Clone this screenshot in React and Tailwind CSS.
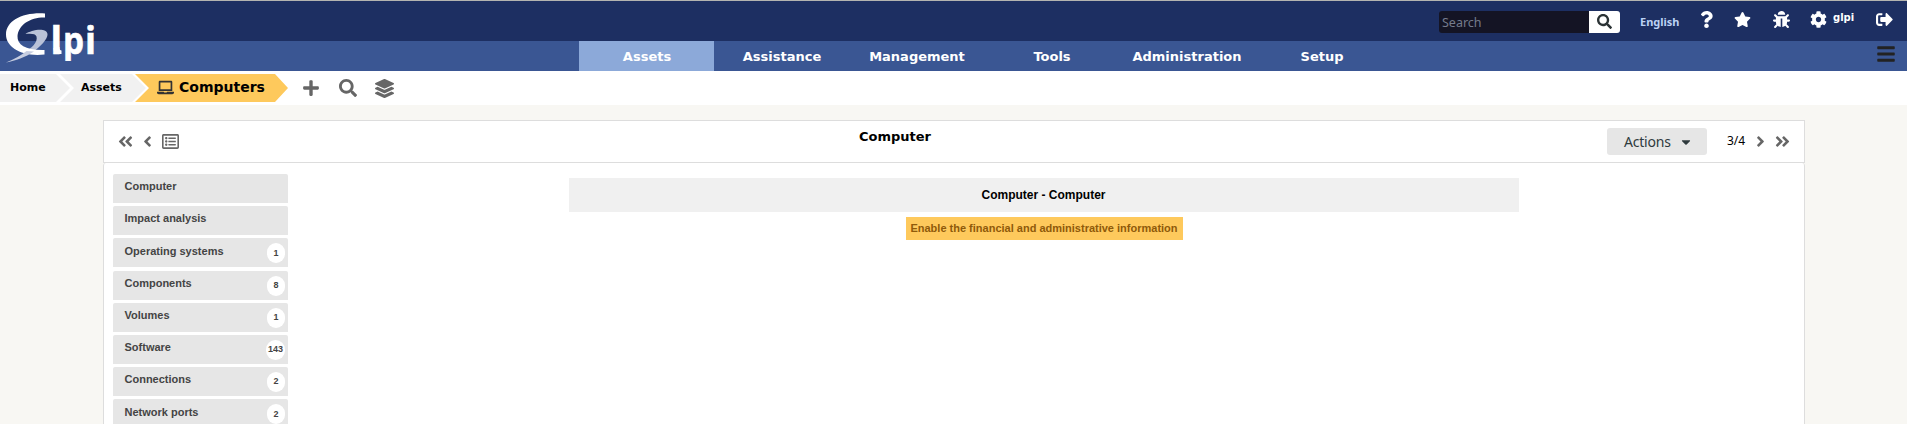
import {
  FaAngleDoubleLeft, FaAngleDoubleRight, FaAngleLeft, FaAngleRight, FaBars, FaBug, FaCaretDown,
  FaCog, FaLaptop, FaLayerGroup, FaPlus, FaQuestion, FaRegListAlt, FaSearch, FaSignOutAlt, FaStar,
} from "react-icons/fa";

const menu = ["Assets", "Assistance", "Management", "Tools", "Administration", "Setup"];

const tabs = [
  ["Computer"],
  ["Impact analysis"],
  ["Operating systems", "1"],
  ["Components", "8"],
  ["Volumes", "1"],
  ["Software", "143"],
  ["Connections", "2"],
  ["Network ports", "2"],
];

function Logo() {
  return (
    <svg width="100" height="60" viewBox="0 0 100 60" className="block" aria-label="Glpi">
      <path d="M25.500 29C31 25 46.500 22 47.500 29C48 34 40 42 33.500 46.500H24C32 43.500 38 37 36.500 31.500C35.500 28.500 31 28.500 25.500 29Z" fill="#b9c2d8" />
      <path d="M45 8.500V12.500C31 12 18.500 19.500 17.500 31C17 40 26 45.500 44.500 45V49.500C22 52 6 42.500 6 29.500C6 15.500 23 7 45 8.500Z" fill="#fff" />
      <path d="M6 57.500C14 54.500 21 50.500 26.500 46L34 46.500C25 52.500 16 55.500 6 57.500Z" fill="#c6cde0" />
      <clipPath id="stem"><path d="M50 0H100V56H50Z" /></clipPath>
      <g clipPath="url(#stem)" fill="#fff" stroke="#fff" strokeWidth="0.6" fontFamily="'Open Sans', sans-serif" fontWeight="700" fontSize="38">
        <text x="50.500" y="48.500">l</text>
        <text x="63" y="48.500" textLength="21" lengthAdjust="spacingAndGlyphs">p</text>
        <text x="85" y="48.500" textLength="11" lengthAdjust="spacingAndGlyphs">i</text>
      </g>
      <path d="M53.500 43Q53.500 49 58 49H61.500V45.500Q59.500 45.500 59.500 42Z" fill="#fff" />
    </svg>
  );
}

function Header() {
  return (
    <header>
      <div className="h-px bg-[#b4b4b0]" />
      <div className="flex h-10 justify-between bg-[#1d2f62]">
        <a className="h-10 w-[100px] shrink-0 overflow-visible pt-1">
          <span className="relative z-10 block"><Logo /></span>
        </a>
        <div className="flex text-white">
          <div className="mt-2.5 flex h-[22px] w-[181px] overflow-hidden rounded-[3px]">
            <div className="flex w-[150px] items-center bg-[#141424] pt-[2px] pl-[3px] font-['Noto_Sans',sans-serif] text-[12.5px] text-[#757b8c]">Search</div>
            <div className="flex flex-1 justify-center bg-white pt-[3px] text-[#2b3335]"><FaSearch size={15} /></div>
          </div>
          <div className="mt-[13px] ml-5 w-[41px] font-['Noto_Sans',sans-serif] text-[11px] leading-4 font-bold whitespace-nowrap text-[#bcd2f5]">English</div>
          <FaQuestion size={17} className="mt-2.5 ml-[17px]" />
          <FaStar size={17} className="mt-2.5 ml-[19px]" />
          <FaBug size={17} className="mt-2.5 ml-[22px]" />
          <FaCog size={17} className="mt-2.5 ml-5" />
          <div className="mt-[9px] ml-1.5 w-[23px] font-['DejaVu_Sans',sans-serif] text-[10px] leading-4 font-bold">glpi</div>
          <FaSignOutAlt size={17} className="mt-2.5 mr-[14px] ml-5" />
        </div>
      </div>
      <div className="flex h-[30px] bg-[#3a5693] pl-[579px]">
        <nav className="flex">
          {menu.map((name, i) => (
            <a key={name} className={`flex w-[135px] items-center justify-center pt-px pl-px text-[13px] leading-4 font-bold text-white ${i === 0 ? "bg-[#8ca9d9]" : ""}`}>
              {name}
            </a>
          ))}
        </nav>
        <FaBars size={20} className="mt-[3px] mr-[11px] ml-auto text-[#222]" />
      </div>
    </header>
  );
}

function Breadcrumb() {
  return (
    <div className="flex h-[34px] bg-white pt-[3px] font-bold text-black">
      <div className="flex h-7 w-[70px] items-center bg-[#f1f1f1] pl-2.5 text-[11px] [clip-path:polygon(0_0,56px_0,70px_50%,56px_100%,0_100%)]">Home</div>
      <div className="-ml-[10px] flex h-7 w-[86px] items-center bg-[#f1f1f1] pl-[21px] text-[11px] [clip-path:polygon(0_0,72px_0,86px_50%,72px_100%,0_100%,14px_50%)]">Assets</div>
      <div className="-ml-[11px] flex h-7 w-[153px] items-center bg-[#fec95c] pl-[22px] text-[14px] [clip-path:polygon(0_0,140px_0,100%_50%,140px_100%,0_100%,14px_50%)]">
        <FaLaptop size={17} className="-mt-0.5 shrink-0 text-[#333]" />
        <span className="-mt-px ml-[5px]">Computers</span>
      </div>
      <FaPlus size={18} className="mt-[5px] ml-3.5 text-[#666]" />
      <FaSearch size={18} className="mt-[5px] ml-[19px] text-[#666]" />
      <FaLayerGroup size={19} className="mt-[5px] ml-[18px] text-[#666]" />
    </div>
  );
}

function Toolbar() {
  return (
    <div className="flex h-[43px] border border-[#ddd] bg-white text-[#666]">
      <div className="flex w-[300px] pl-[13px]">
        <FaAngleDoubleLeft size={17} className="mt-3" />
        <FaAngleLeft size={17} className="mt-3 ml-[5px]" />
        <FaRegListAlt size={17} className="mt-3 ml-[6px]" />
      </div>
      <h1 className="flex-1 pt-2 pr-[34px] text-center text-[13px] leading-4 font-bold text-black">Computer</h1>
      <div className="flex w-[384px] justify-end pr-[13px]">
        <button className="mt-[7px] flex h-[27px] w-[100px] items-center rounded-[3px] bg-[#e6e6e6] pl-[17px] font-['Noto_Sans',sans-serif] text-[14px] tracking-[-0.2px] text-[#2f3a3d]">
          Actions<FaCaretDown size={14} className="ml-2" />
        </button>
        <span className="mt-[11px] ml-5 w-5 font-['Noto_Sans',sans-serif] text-[12px] leading-[18px] text-black">3/4</span>
        <FaAngleRight size={17} className="mt-3 ml-[5px]" />
        <FaAngleDoubleRight size={17} className="mt-3 ml-[5px]" />
      </div>
    </div>
  );
}

export default function App() {
  return (
    <div className="h-[424px] overflow-hidden bg-[#f8f7f3] font-['DejaVu_Sans',sans-serif]">
      <Header />
      <Breadcrumb />
      <main className="mt-[15px] mr-[102px] ml-[103px]">
        <Toolbar />
        <div className="flex h-[270px] rounded-t-[3px] border-x border-[#ddd] bg-white font-['Liberation_Sans',Arial,sans-serif]">
          <aside className="ml-[9px] flex w-[175px] flex-col gap-[3.2px] pt-[11px]">
            {tabs.map(([name, count]) => (
              <div key={name} className="flex h-[29px] shrink-0 justify-between rounded-t-[2px] bg-[#e6e6e6] pr-[3px] pl-[11.5px] text-[#444]">
                <span className="pt-[4.26px] text-[11px] leading-4 font-bold">{name}</span>
                {count && (
                  <span className="mt-[5px] flex h-5 min-w-[18px] items-center justify-center rounded-full bg-white px-[2px] text-[9px] font-bold">{count}</span>
                )}
              </div>
            ))}
          </aside>
          <section className="ml-[281px] flex w-[950px] flex-col items-center pt-[15px] font-bold">
            <h2 className="flex h-[34px] w-full items-center justify-center bg-[#f0f0f0] pr-px text-[12px] text-black">Computer - Computer</h2>
            <a className="mt-[5px] flex h-[23px] w-[277px] items-center justify-center bg-[#fec95c] text-[11px] text-[#8f5a0a]">Enable the financial and administrative information</a>
          </section>
        </div>
      </main>
    </div>
  );
}
